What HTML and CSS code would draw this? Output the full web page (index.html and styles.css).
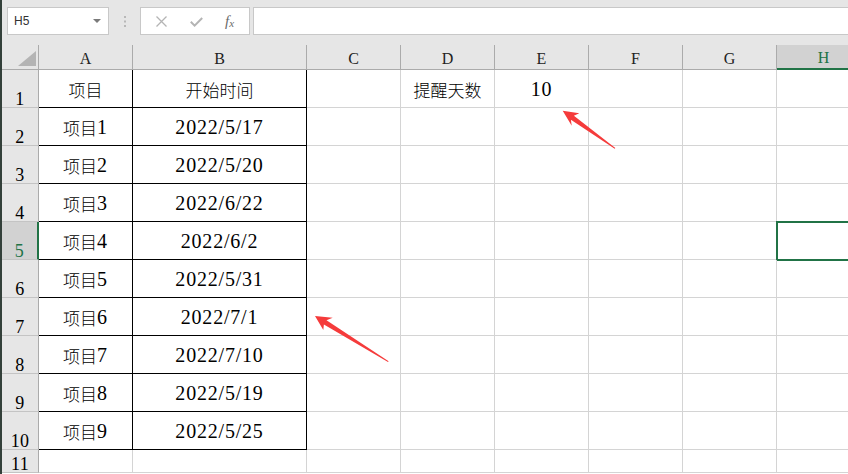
FILE: index.html
```html
<!DOCTYPE html>
<html>
<head>
    <meta charset="UTF-8">
    <title>提醒天数</title>
    <link rel="stylesheet" href="styles.css">
</head>
<body>
    <div class="app">
        <div class="toolbar">
            <div class="namebox">
                <span>H5</span>
                <svg class="caret" width="8" height="4" viewBox="0 0 8 4"><path d="M0 0H8L4 4Z" fill="#7a7a7a"/></svg>
            </div>
            <svg class="grip" width="3" height="11" viewBox="0 0 3 11">
                <rect x="0" y="0" width="2" height="2" fill="#b8b8b8"/>
                <rect x="0" y="4.5" width="2" height="2" fill="#b8b8b8"/>
                <rect x="0" y="9" width="2" height="2" fill="#b8b8b8"/>
            </svg>
            <div class="fxbox">
                <svg class="ico-x" width="11" height="11" viewBox="0 0 11 11"><path d="M0.5 0.5L10.5 10.5M10.5 0.5L0.5 10.5" stroke="#b4b4b4" stroke-width="1.3"/></svg>
                <svg class="ico-ok" width="13" height="10" viewBox="0 0 13 10"><path d="M0.8 4.8L4.6 8.6L12.2 1" stroke="#b4b4b4" stroke-width="2" fill="none"/></svg>
                <span class="fx">f<sub>x</sub></span>
            </div>
            <div class="formula"></div>
        </div>

        <div class="sheet">
            <div class="row head">
                <div class="cell corner"><svg width="18" height="15" viewBox="0 0 18 15"><path d="M18 0V15H0Z" fill="#b4b4b4"/></svg></div>
                <div class="cell">A</div>
                <div class="cell">B</div>
                <div class="cell">C</div>
                <div class="cell">D</div>
                <div class="cell">E</div>
                <div class="cell">F</div>
                <div class="cell">G</div>
                <div class="cell active">H</div>
            </div>

            <div class="row">
                <div class="cell num">1</div>
                <div class="cell bx"><span class="zh">项目</span></div>
                <div class="cell bx"><span class="zh">开始时间</span></div>
                <div class="cell"></div>
                <div class="cell"><span class="zh">提醒天数</span></div>
                <div class="cell">10</div>
                <div class="cell"></div><div class="cell"></div><div class="cell"></div>
            </div>
            <div class="row">
                <div class="cell num">2</div>
                <div class="cell bx"><span class="zh">项目</span>1</div>
                <div class="cell bx">2022/5/17</div>
                <div class="cell"></div><div class="cell"></div><div class="cell"></div>
                <div class="cell"></div><div class="cell"></div><div class="cell"></div>
            </div>
            <div class="row">
                <div class="cell num">3</div>
                <div class="cell bx"><span class="zh">项目</span>2</div>
                <div class="cell bx">2022/5/20</div>
                <div class="cell"></div><div class="cell"></div><div class="cell"></div>
                <div class="cell"></div><div class="cell"></div><div class="cell"></div>
            </div>
            <div class="row">
                <div class="cell num">4</div>
                <div class="cell bx"><span class="zh">项目</span>3</div>
                <div class="cell bx">2022/6/22</div>
                <div class="cell"></div><div class="cell"></div><div class="cell"></div>
                <div class="cell"></div><div class="cell"></div><div class="cell"></div>
            </div>
            <div class="row">
                <div class="cell num active">5</div>
                <div class="cell bx"><span class="zh">项目</span>4</div>
                <div class="cell bx">2022/6/2</div>
                <div class="cell"></div><div class="cell"></div><div class="cell"></div>
                <div class="cell"></div><div class="cell"></div><div class="cell sel"></div>
            </div>
            <div class="row">
                <div class="cell num">6</div>
                <div class="cell bx"><span class="zh">项目</span>5</div>
                <div class="cell bx">2022/5/31</div>
                <div class="cell"></div><div class="cell"></div><div class="cell"></div>
                <div class="cell"></div><div class="cell"></div><div class="cell"></div>
            </div>
            <div class="row">
                <div class="cell num">7</div>
                <div class="cell bx"><span class="zh">项目</span>6</div>
                <div class="cell bx">2022/7/1</div>
                <div class="cell"></div><div class="cell"></div><div class="cell"></div>
                <div class="cell"></div><div class="cell"></div><div class="cell"></div>
            </div>
            <div class="row">
                <div class="cell num">8</div>
                <div class="cell bx"><span class="zh">项目</span>7</div>
                <div class="cell bx">2022/7/10</div>
                <div class="cell"></div><div class="cell"></div><div class="cell"></div>
                <div class="cell"></div><div class="cell"></div><div class="cell"></div>
            </div>
            <div class="row">
                <div class="cell num">9</div>
                <div class="cell bx"><span class="zh">项目</span>8</div>
                <div class="cell bx">2022/5/19</div>
                <div class="cell"></div><div class="cell"></div><div class="cell"></div>
                <div class="cell"></div><div class="cell"></div><div class="cell"></div>
            </div>
            <div class="row">
                <div class="cell num">10</div>
                <div class="cell bx"><span class="zh">项目</span>9</div>
                <div class="cell bx">2022/5/25</div>
                <div class="cell"></div><div class="cell"></div><div class="cell"></div>
                <div class="cell"></div><div class="cell"></div><div class="cell"></div>
            </div>
            <div class="row last">
                <div class="cell num">11</div>
                <div class="cell"></div><div class="cell"></div><div class="cell"></div><div class="cell"></div>
                <div class="cell"></div><div class="cell"></div><div class="cell"></div><div class="cell"></div>
            </div>
        </div>

        <!-- red pointer arrows drawn over the sheet -->
        <svg class="arrows" width="848" height="474" viewBox="0 0 848 474">
            <polygon points="562.7,110.7 579.3,113.3 573.9,115.7 615.3,147.9 614.7,148.7 570.9,119.7 571.7,125.7" fill="#f53b3b"/>
            <polygon points="315,316 332.7,317.7 326.5,320.2 388.6,361.3 388,362.1 323.9,324.4 323.3,330" fill="#f53b3b"/>
        </svg>
    </div>
</body>
</html>
```

FILE: styles.css
```css
body {
    margin: 0;
    background-color: #ffffff;
    font-family: "Liberation Serif", "Noto Sans CJK SC", serif;
}

.app {
    position: relative;
    width: 848px;
    height: 474px;
    overflow: hidden;
    border-left: 2px solid #33403a;
    box-sizing: border-box;
}

/* formula bar */
.toolbar {
    display: flex;
    align-items: flex-start;
    height: 45px;
    padding: 7px 0 0 5px;
    box-sizing: border-box;
    background-color: #e6e6e6;
}

.namebox {
    display: flex;
    align-items: center;
    justify-content: space-between;
    width: 102px;
    height: 28px;
    padding: 0 7px 0 6px;
    box-sizing: border-box;
    background-color: #ffffff;
    border: 1px solid #c8c8c8;
    font-family: "Liberation Sans", Arial, sans-serif;
    font-size: 12px;
    color: #333;
}

.caret {
    margin-top: -1px;
}

.grip {
    margin: 9px 0 0 15px;
}

.fxbox {
    display: flex;
    align-items: center;
    width: 110px;
    height: 28px;
    margin-left: 13px;
    padding-left: 15px;
    box-sizing: border-box;
    background-color: #ffffff;
    border: 1px solid #c8c8c8;
}

.ico-x {
    margin-top: 1px;
}

.ico-ok {
    margin-left: 23px;
    margin-top: 2px;
}

.fx {
    margin-left: 22px;
    font-style: italic;
    font-size: 15px;
    color: #6a6a6a;
}

.fx sub {
    font-size: 11px;
    vertical-align: -1px;
}

.formula {
    flex: 1;
    height: 28px;
    margin-left: 3px;
    box-sizing: border-box;
    background-color: #ffffff;
    border: 1px solid #c8c8c8;
    border-right: none;
}

/* grid */
.sheet {
    width: 870px;
}

.row {
    display: grid;
    grid-template-columns: 37px 94px 174px repeat(6, 94px);
    height: 38px;
}

.row.last {
    height: 23px;
}

.cell {
    position: relative;
    display: flex;
    align-items: center;
    justify-content: center;
    box-sizing: border-box;
    border-right: 1px solid #d4d4d4;
    border-bottom: 1px solid #d4d4d4;
    font-size: 20px;
    letter-spacing: 0.8px;
    color: #000;
    padding-top: 2px;
}

.zh {
    font-family: "Noto Sans CJK SC", sans-serif;
    font-size: 17px;
    font-weight: 300;
    letter-spacing: 0;
}

.head {
    height: 25px;
}

.head .cell {
    background-color: #e6e6e6;
    border-right-color: #ababab;
    border-bottom-color: #ababab;
    font-size: 16px;
    letter-spacing: 0;
    color: #222;
    padding-top: 3px;
}

.head .corner {
    align-items: flex-end;
    justify-content: flex-end;
    padding: 0 2px 3px 0;
}

.head .active {
    background-color: #d2d2d2;
    border-bottom: 2px solid #217346;
    color: #217346;
}

.num {
    align-items: flex-end;
    background-color: #e6e6e6;
    border-right-color: #ababab;
    border-bottom-color: #c4c4c4;
    font-size: 18px;
    line-height: 15px;
    letter-spacing: 0.3px;
    padding-top: 0;
}

.num.active {
    background-color: #d2d2d2;
    border-right: 2px solid #217346;
    color: #217346;
}

.bx {
    border-right-color: #000;
    border-bottom-color: #000;
}

.sel::after {
    content: "";
    position: absolute;
    top: -1px;
    left: -1px;
    right: -1px;
    bottom: -2px;
    border: 2px solid #217346;
}

.arrows {
    position: absolute;
    top: 0;
    left: -2px;
    pointer-events: none;
}
```
